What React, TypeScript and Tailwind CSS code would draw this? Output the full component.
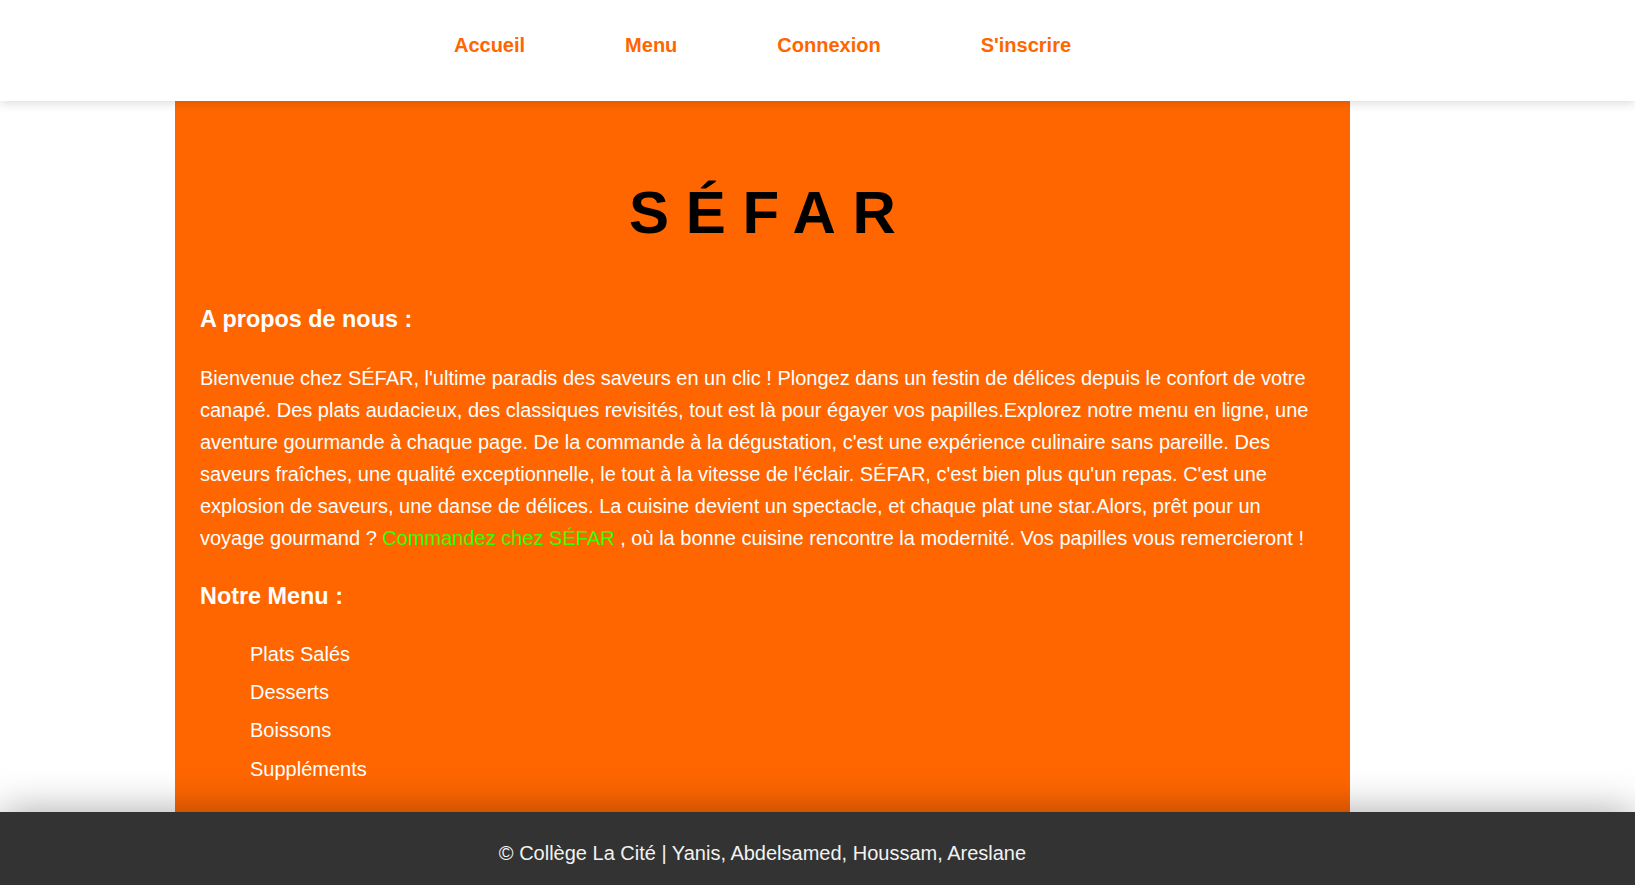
import React from "react";

export default function App() {
  const font = { fontFamily: '"Liberation Sans", Arial, sans-serif' };
  return (
    <div className="min-h-screen bg-white flex flex-col" style={font}>
      <header className="relative z-10 h-[101px] bg-white shadow-[0_2px_10px_rgba(0,0,0,0.15)]">
        <nav className="ml-[175px] w-[1175px] pt-[29px] flex justify-center gap-[100px]">
          <a href="#" className="text-[20px] leading-[32px] font-bold text-[#ff6600]">Accueil</a>
          <a href="#" className="text-[20px] leading-[32px] font-bold text-[#ff6600]">Menu</a>
          <a href="#" className="text-[20px] leading-[32px] font-bold text-[#ff6600]">Connexion</a>
          <a href="#" className="text-[20px] leading-[32px] font-bold text-[#ff6600]">S'inscrire</a>
        </nav>
      </header>

      <main className="ml-[175px] w-[1175px] h-[711px] bg-[#ff6600] px-[25px] pt-[77px]">
        <h1 className="text-center text-[60px] leading-[69px] font-bold text-black tracking-[16.7px] pl-[16.7px]">
          SÉFAR
        </h1>
        <h2 className="mt-[58px] text-[23.4px] leading-[28px] font-bold text-white">A propos de nous :</h2>
        <p className="mt-[29px] text-[20px] leading-[32px] text-white">
          Bienvenue chez SÉFAR, l'ultime paradis des saveurs en un clic ! Plongez dans un festin de délices depuis le confort de votre canapé. Des plats audacieux, des classiques revisités, tout est là pour égayer vos papilles.Explorez notre menu en ligne, une aventure gourmande à chaque page. De la commande à la dégustation, c'est une expérience culinaire sans pareille. Des saveurs fraîches, une qualité exceptionnelle, le tout à la vitesse de l'éclair. SÉFAR, c'est bien plus qu'un repas. C'est une explosion de saveurs, une danse de délices. La cuisine devient un spectacle, et chaque plat une star.Alors, prêt pour un voyage gourmand ?{" "}
          <a href="#" className="text-[#33ff00]">Commandez chez SÉFAR</a> , où la bonne cuisine rencontre la modernité. Vos papilles vous remercieront !
        </p>
        <h2 className="mt-[28px] text-[23.4px] leading-[28px] font-bold text-white">Notre Menu :</h2>
        <ul className="mt-[25px] pl-[50px] text-[20px] leading-[38.2px] text-white">
          <li>Plats Salés</li>
          <li>Desserts</li>
          <li>Boissons</li>
          <li>Suppléments</li>
        </ul>
      </main>

      <footer className="relative z-10 h-[73px] bg-[#333333] shadow-[0_0_40px_rgba(0,0,0,0.35)] pt-[25px]">
        <p className="ml-[175px] w-[1175px] text-center text-[20px] leading-[32px] text-[#f2f2f2]">
          © Collège La Cité | Yanis, Abdelsamed, Houssam, Areslane
        </p>
      </footer>
    </div>
  );
}
